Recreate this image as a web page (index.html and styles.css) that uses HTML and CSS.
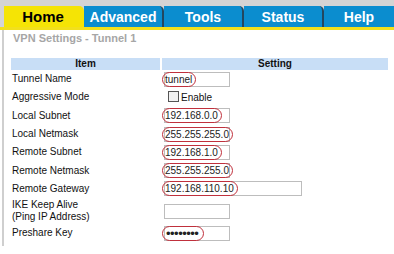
FILE: index.html
```html
<!DOCTYPE html>
<html lang="en">
<head>
    <meta charset="UTF-8">
    <title>VPN Settings - Tunnel 1</title>
    <link rel="stylesheet" href="styles.css">
</head>
<body>

<div class="tabs">
    <a class="tab active">Home</a>
    <a class="tab">Advanced</a>
    <a class="tab">Tools</a>
    <a class="tab">Status</a>
    <a class="tab last">Help</a>
</div>

<div class="content">
    <div class="title">VPN Settings - Tunnel 1</div>

    <table class="settings">
        <tr class="head">
            <th class="col-item">Item</th>
            <th>Setting</th>
        </tr>
        <tr>
            <td>Tunnel Name</td>
            <td><span class="field"><span class="mark">tunnel</span></span></td>
        </tr>
        <tr>
            <td>Aggressive Mode</td>
            <td><span class="check"></span>Enable</td>
        </tr>
        <tr>
            <td>Local Subnet</td>
            <td><span class="field"><span class="mark">192.168.0.0</span></span></td>
        </tr>
        <tr>
            <td>Local Netmask</td>
            <td><span class="field"><span class="mark">255.255.255.0</span></span></td>
        </tr>
        <tr>
            <td>Remote Subnet</td>
            <td><span class="field"><span class="mark">192.168.1.0</span></span></td>
        </tr>
        <tr>
            <td>Remote Netmask</td>
            <td><span class="field"><span class="mark">255.255.255.0</span></span></td>
        </tr>
        <tr>
            <td>Remote Gateway</td>
            <td><span class="field wide"><span class="mark">192.168.110.10</span></span></td>
        </tr>
        <tr class="tall">
            <td>IKE Keep Alive<br>(Ping IP Address)</td>
            <td><span class="field"></span></td>
        </tr>
        <tr>
            <td>Preshare Key</td>
            <td><span class="field"><span class="mark dots">&bull;&bull;&bull;&bull;&bull;&bull;&bull;&bull;</span></span></td>
        </tr>
    </table>
</div>

</body>
</html>
```

FILE: styles.css
```css
body {
    margin: 0;
    font-family: "Liberation Sans", Arial, sans-serif;
    background: #ffffff;
    width: 394px;
    height: 254px;
    overflow: hidden;
}
.tabs {
    display: flex;
    background: #d4d4d4;
    padding: 6px 0 0 4px;
    border-bottom: 3px solid #f2e01c;
    height: 21px;
}
.tab {
    flex: none;
    display: flex;
    align-items: center;
    justify-content: center;
    background: #0b8dcf;
    color: #ffffff;
    font-weight: bold;
    font-size: 14px;
    border-radius: 0 5px 0 0;
    border-right: 2px solid #23475e;
    width: 78px;
    height: 21px;
}
.tab.active {
    background: #f5e405;
    color: #000000;
    border-right: 2px solid #f5e405;
    font-size: 15px;
}
.tab.last {
    flex: 1;
    border-right: none;
    border-radius: 0;
}
.content {
    border-left: 2px solid #cfcfcf;
    margin-left: 2px;
    padding: 2px 0 0 6px;
    height: 214px;
}
.title {
    color: #a6a6a6;
    font-size: 11px;
    font-weight: bold;
    margin-left: 3px;
}
.settings {
    border-collapse: separate;
    border-spacing: 0;
    margin-top: 14px;
    margin-left: 1px;
    width: 377px;
    font-size: 10px;
    color: #111111;
}
.settings th {
    background: #c8def6;
    font-weight: bold;
    font-size: 10px;
    height: 12px;
    padding: 0;
    line-height: 12px;
}
.settings th.col-item {
    width: 149px;
    border-right: 2px solid #ffffff;
}
.settings td {
    padding: 0 0 0 1px;
    height: 18.3px;
    line-height: 12px;
    vertical-align: middle;
}
.settings td + td {
    padding-left: 2px;
}
.settings tr.tall td {
    height: 26px;
}
.field {
    display: inline-flex;
    align-items: center;
    box-sizing: border-box;
    width: 66px;
    height: 15px;
    border: 1px solid #bdbdbd;
    vertical-align: middle;
}
.field.wide {
    width: 138px;
}
.mark {
    margin-left: -3px;
    border: 1px solid #c0303c;
    border-radius: 8px;
    padding: 0 3px 0 2px;
    font-size: 10px;
    line-height: 13px;
    color: #222222;
    white-space: nowrap;
}
.mark.dots {
    font-size: 13px;
    line-height: 13px;
    letter-spacing: -0.5px;
    padding: 0 5px 0 3px;
}
.check {
    display: inline-block;
    width: 9px;
    height: 9px;
    border: 1px solid #555555;
    background: #f2f2f2;
    margin: 0 2px 0 4px;
    vertical-align: -1px;
}
```
